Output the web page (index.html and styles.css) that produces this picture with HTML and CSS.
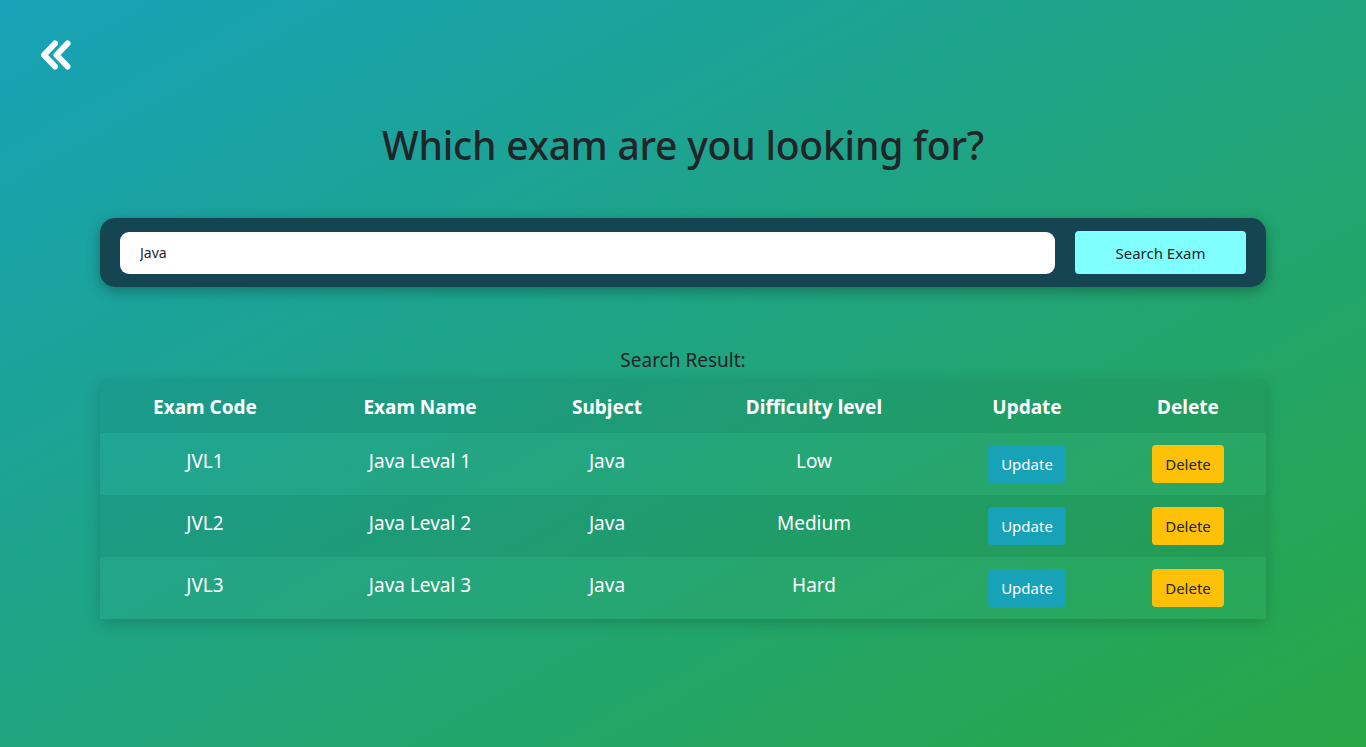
FILE: index.html
```html
<!DOCTYPE html>
<html lang="en">
<head>
<meta charset="utf-8">
<title>Search Exam</title>
<link rel="stylesheet" href="styles.css">
</head>
<body>
<div class="page">
  <a class="back" href="#" aria-label="Back">
    <svg width="33" height="30" viewBox="0 0 33 30">
      <path d="M16 3.5 L5 15 L16 26.5" fill="none" stroke="#fff" stroke-width="6" stroke-linecap="round" stroke-linejoin="round"/>
      <path d="M28.5 3.5 L17.5 15 L28.5 26.5" fill="none" stroke="#fff" stroke-width="6" stroke-linecap="round" stroke-linejoin="round"/>
    </svg>
  </a>
  <h1 class="title">Which exam are you looking for?</h1>
  <form class="search">
    <input class="search-input" type="text" value="Java">
    <button class="search-btn" type="button">Search Exam</button>
  </form>
  <p class="result-label">Search Result:</p>
  <table class="results">
    <colgroup>
      <col class="c1"><col class="c2"><col class="c3"><col class="c4"><col class="c5"><col class="c6">
    </colgroup>
    <thead>
      <tr><th>Exam Code</th><th>Exam Name</th><th>Subject</th><th>Difficulty level</th><th>Update</th><th>Delete</th></tr>
    </thead>
    <tbody>
      <tr class="light"><td>JVL1</td><td>Java Leval 1</td><td>Java</td><td>Low</td><td class="act"><button class="btn btn-update">Update</button></td><td class="act"><button class="btn btn-delete">Delete</button></td></tr>
      <tr class="dark"><td>JVL2</td><td>Java Leval 2</td><td>Java</td><td>Medium</td><td class="act"><button class="btn btn-update">Update</button></td><td class="act"><button class="btn btn-delete">Delete</button></td></tr>
      <tr class="light"><td>JVL3</td><td>Java Leval 3</td><td>Java</td><td>Hard</td><td class="act"><button class="btn btn-update">Update</button></td><td class="act"><button class="btn btn-delete">Delete</button></td></tr>
    </tbody>
  </table>
</div>
</body>
</html>
```
FILE: styles.css
```css
* { box-sizing: border-box; }
html, body { margin: 0; height: 100%; }
body {
  font-family: "Noto Sans", "Open Sans", sans-serif;
  color: #212529;
  background: linear-gradient(to bottom right, #17a2b8, #28a745);
  min-height: 747px;
}
.page {
  padding: 40px 100px 0 100px;
  position: relative;
}
.back {
  position: absolute;
  left: 39px;
  top: 40px;
  display: block;
  width: 33px;
  height: 30px;
}
.back svg { display: block; }
.title {
  margin: 80px 0 0 0;
  text-align: center;
  font-size: 39px;
  font-weight: 500;
  line-height: 50px;
  color: #212529;
  letter-spacing: -0.2px;
}
.search {
  margin: 48px 0 0 0;
  height: 69px;
  background: #164552;
  border-radius: 15px;
  box-shadow: 0 4px 14px rgba(0,0,0,0.3);
  display: flex;
  align-items: center;
  padding: 0 20px;
  gap: 20px;
}
.search-input {
  flex: 1;
  height: 42px;
  border: none;
  border-radius: 9px;
  background: #fff;
  padding: 0 20px;
  font-family: inherit;
  font-size: 14px;
  color: #212529;
  outline: none;
}
.search-btn {
  width: 171px;
  height: 43px;
  border: none;
  border-radius: 4px;
  background: #80ffff;
  color: #212529;
  font-family: inherit;
  font-size: 15px;
}
.result-label {
  margin: 60px 0 0 0;
  text-align: center;
  font-size: 19px;
  line-height: 26px;
}
.results {
  margin-top: 7px;
  width: 100%;
  border-collapse: collapse;
  table-layout: fixed;
  box-shadow: 0 4px 14px rgba(0,0,0,0.18);
  color: #fff;
}
.c1 { width: 210px; }
.c2 { width: 220px; }
.c3 { width: 154px; }
.c4 { width: 260px; }
.c5 { width: 166px; }
.c6 { width: 156px; }
.results thead tr { background: rgba(0,0,0,0.05); }
.results th {
  height: 53px;
  font-size: 19px;
  font-weight: 700;
  text-align: center;
  padding: 0;
}
.results td {
  height: 62px;
  font-size: 19px;
  text-align: center;
  padding: 0 0 6px 0;
}
.results td.act { padding: 0; }
.results tr.light { background: rgba(255,255,255,0.02); }
.results tr.dark { background: rgba(0,0,0,0.05); }
.btn {
  height: 38px;
  border: none;
  border-radius: 4px;
  font-family: inherit;
  font-size: 15px;
  padding: 0 13px;
  vertical-align: middle;
}
.btn-update { background: #17a2b8; color: #fff; }
.btn-delete { background: #ffc107; color: #212529; }
```
